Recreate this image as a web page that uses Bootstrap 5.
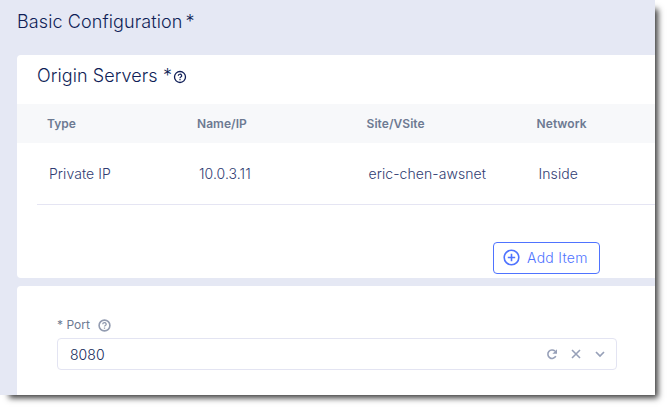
<!DOCTYPE html>
<html lang="en">
<head>
<meta charset="utf-8">
<meta name="viewport" content="width=device-width, initial-scale=1">
<title>Basic Configuration</title>
<link href="https://cdn.jsdelivr.net/npm/bootstrap@5.3.0/dist/css/bootstrap.min.css" rel="stylesheet">
<style>
body{font-family:Inter,"Liberation Sans",sans-serif;background:#fff;min-height:410px;color:#0f1e57}
.page{width:655px;height:395px;background:#e5e8f4;box-shadow:6px 6px 6px -3px #3c3c3c;padding-left:17px}
.page-title{height:55px;font-size:18px;font-weight:300;line-height:24px;padding-top:10px;letter-spacing:.1px}
.ast{margin-left:3px}
.panel{background:#fff;border-radius:4px 0 0 0}
.origin{height:223px;border-bottom-left-radius:4px}
.port{height:109px;margin-top:8px;padding:31px 38px 0 40px}
.panel-title{height:49px;font-size:18px;font-weight:300;line-height:24px;padding:9px 0 0 20px;letter-spacing:.08px}
.help{margin:6px 0 0 1px}
.cols{display:grid;grid-template-columns:150px 169.6px 170px 1fr}
.head-row{height:39px;line-height:39px;background:#f7f8fa;color:#6d7a92;font-size:12px;font-weight:600;padding-left:30px;letter-spacing:.04px}
.data-row{height:62px;line-height:62px;margin-left:20px;padding-left:12px;border-bottom:1px solid #e5e5f3;font-size:14px;font-weight:350;color:#303c72;letter-spacing:.06px}
.btn-add{--bs-btn-color:#4f73ff;--bs-btn-border-color:#4f73ff;width:107px;height:32px;margin:37px 0 0 476px;padding:0 0 1px 9px;border-radius:4px;font-size:14px;font-weight:300;letter-spacing:.27px}
.btn-add span{margin-left:7px}
.field-label{height:16px;line-height:16px;font-size:12px;color:#6d7a92}
.field{width:560px;height:32px;margin-top:5px;border:1px solid #e3e4f2;border-radius:4px;padding:1px 10px 0 12px;font-size:14px;font-weight:350;letter-spacing:.06px}
.tools{gap:12px;margin-top:-2px}
svg{display:block;flex:none}
</style>
<script src="https://cdn.jsdelivr.net/npm/bootstrap@5.3.0/dist/js/bootstrap.bundle.min.js"></script>
</head>
<body>
<main class="page">
  <h1 class="page-title m-0"><span>Basic Configuration</span><span class="ast">*</span></h1>
  <section class="panel origin">
    <h2 class="panel-title m-0 d-flex align-items-start"><span>Origin Servers *</span>
      <svg class="help" width="14" height="14" viewBox="0 0 14 14" fill="none" stroke="#0f1e57" stroke-width="1.3"><circle cx="7" cy="7" r="5.5"/><path d="M5.3 5.8a1.7 1.5 0 1 1 2.5 1.2Q7 7.4 7 8.2M7 9v1.2" stroke-width="1.2"/></svg>
    </h2>
    <div class="cols head-row"><span>Type</span><span>Name/IP</span><span>Site/VSite</span><span>Network</span></div>
    <div class="cols data-row"><span>Private IP</span><span>10.0.3.11</span><span>eric-chen-awsnet</span><span>Inside</span></div>
    <button type="button" class="btn btn-outline-primary btn-add d-flex align-items-center">
      <svg width="17" height="17" viewBox="0 0 17 17" fill="none" stroke="currentColor" stroke-width="1.6"><circle cx="8.5" cy="8.5" r="7.3"/><path d="M8.5 4.8v7.4M4.8 8.5h7.4"/></svg>
      <span>Add Item</span>
    </button>
  </section>
  <section class="panel port">
    <div class="field-label d-flex align-items-center gap-2"><span>* Port</span>
      <svg width="13" height="13" viewBox="0 0 13 13" fill="none" stroke="#929bb0" stroke-width="1.6"><circle cx="6.5" cy="6.5" r="5.4"/><path d="M4.8 5.3a1.7 1.5 0 1 1 2.5 1.2Q6.5 6.9 6.5 7.5M6.5 8.4v1.3" stroke-width="1.3"/></svg>
    </div>
    <div class="field d-flex align-items-center">
      <span class="me-auto">8080</span>
      <div class="tools d-flex">
        <svg width="12" height="12" viewBox="0 0 12 12" fill="none" stroke="#97a0b8" stroke-width="1.6"><path d="M9.8 8.2A4.2 4.2 0 1 1 9 3.2"/><path d="M11 1.2v4.6H6.4z" fill="#97a0b8" stroke="none"/></svg>
        <svg width="12" height="12" viewBox="0 0 12 12" fill="none" stroke="#97a0b8" stroke-width="1.6"><path d="M2 2l8 8M10 2l-8 8"/></svg>
        <svg width="12" height="12" viewBox="0 0 12 12" fill="none" stroke="#97a0b8" stroke-width="1.7"><path d="M2 4l4 4 4-4"/></svg>
      </div>
    </div>
  </section>
</main>
</body>
</html>
